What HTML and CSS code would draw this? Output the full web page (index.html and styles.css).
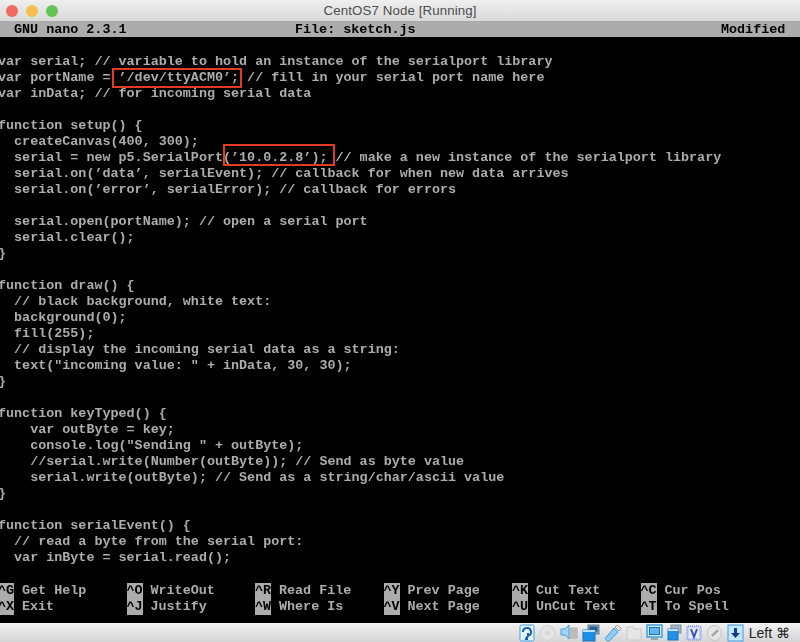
FILE: index.html
```html
<!DOCTYPE html>
<html lang="en">
<head>
<meta charset="utf-8">
<title>CentOS7 Node [Running]</title>
<link rel="stylesheet" href="styles.css">
</head>
<body>
<div class="window">
  <header class="titlebar">
    <div class="lights"><span class="light red"></span><span class="light yellow"></span><span class="light green"></span></div>
    <div class="title">CentOS7 Node [Running]</div>
  </header>
  <main class="screen">
    <div class="nanobar"><span>GNU nano 2.3.1</span><span>File: sketch.js</span><span>Modified</span></div>
<pre class="code">

var serial; // variable to hold an instance of the serialport library
var portName = ’/dev/ttyACM0’; // fill in your serial port name here
var inData; // for incoming serial data

function setup() {
  createCanvas(400, 300);
  serial = new p5.SerialPort(’10.0.2.8’); // make a new instance of the serialport library
  serial.on(’data’, serialEvent); // callback for when new data arrives
  serial.on(’error’, serialError); // callback for errors

  serial.open(portName); // open a serial port
  serial.clear();
}

function draw() {
  // black background, white text:
  background(0);
  fill(255);
  // display the incoming serial data as a string:
  text("incoming value: " + inData, 30, 30);
}

function keyTyped() {
    var outByte = key;
    console.log("Sending " + outByte);
    //serial.write(Number(outByte)); // Send as byte value
    serial.write(outByte); // Send as a string/char/ascii value
}

function serialEvent() {
  // read a byte from the serial port:
  var inByte = serial.read();
</pre>
    <div class="keys">
      <div class="key"><b>^G</b><span>Get Help</span></div>
      <div class="key"><b>^O</b><span>WriteOut</span></div>
      <div class="key"><b>^R</b><span>Read File</span></div>
      <div class="key"><b>^Y</b><span>Prev Page</span></div>
      <div class="key"><b>^K</b><span>Cut Text</span></div>
      <div class="key"><b>^C</b><span>Cur Pos</span></div>
      <div class="key"><b>^X</b><span>Exit</span></div>
      <div class="key"><b>^J</b><span>Justify</span></div>
      <div class="key"><b>^W</b><span>Where Is</span></div>
      <div class="key"><b>^V</b><span>Next Page</span></div>
      <div class="key"><b>^U</b><span>UnCut Text</span></div>
      <div class="key"><b>^T</b><span>To Spell</span></div>
    </div>
    <div class="mark mark-port"></div>
    <div class="mark mark-ip"></div>
  </main>
  <footer class="statusbar">
    <svg class="ic" width="16" height="18" viewBox="0 0 16 18"><rect x="1" y="1" width="14" height="16" rx="1.5" fill="#e4f3fc" stroke="#3f9ee0"/><path d="M4 8a4 4 0 1 1 5 3.800V9M9 11.800 6.500 15M9 15H6" fill="none" stroke="#1c5fa8" stroke-width="2"/></svg>
    <svg class="ic" width="17" height="18" viewBox="0 0 17 18"><circle cx="8.500" cy="9" r="7.500" fill="#e4e4e4" stroke="#cfcfcf"/><circle cx="8.500" cy="9" r="1.500" fill="#ececec" stroke="#bbb" stroke-width=".7"/></svg>
    <svg class="ic" width="18" height="18" viewBox="0 0 18 18"><path d="M1 5h4l4-4v14l-4-4H1z" fill="#9fd6f6" stroke="#3f9ee0"/><rect x="10" y="4" width="7" height="10" fill="#cfcfcf" stroke="#aaa"/><path d="M11 6h5M11 8h5M11 10h5M11 12h5" stroke="#999" stroke-width=".7"/></svg>
    <svg class="ic" width="18" height="18" viewBox="0 0 18 18"><rect x="6" y="1" width="11" height="9" fill="#9a9a9a" stroke="#5d87a8"/><rect x="7.500" y="2.500" width="8" height="5" fill="#2a5f98"/><rect x="1" y="6" width="12" height="11" fill="#1b8fe6" stroke="#1a6fb8"/><rect x="1" y="6" width="12" height="2" fill="#bde0f7"/></svg>
    <svg class="ic" width="18" height="18" viewBox="0 0 18 18"><path d="M1.500 14 10 4l4 4-8 8.500c-2 1.200-5 0-4.500-2.500z" fill="#8ecbf3" stroke="#3f9ee0"/><path d="m11 3 2.500-2L17 4.500 15 7z" fill="#e8e8e8" stroke="#999"/></svg>
    <svg class="ic" width="16" height="18" viewBox="0 0 16 18"><path d="M1 5V3h6l1 2h7v11H1z" fill="#e6e6e6" stroke="#c9c9c9"/></svg>
    <svg class="ic" width="17" height="18" viewBox="0 0 17 18"><rect x="1" y="1" width="15" height="12" fill="#d9eefb" stroke="#3f9ee0" stroke-width="1.500"/><rect x="3.500" y="3.500" width="10" height="7" fill="#62b5ee" stroke="#1d6fb5"/><path d="M5 15h7" stroke="#9aa" stroke-width="2"/></svg>
    <svg class="ic" width="15" height="18" viewBox="0 0 15 18"><rect x="4" y="1" width="10" height="8" fill="#aab3bd" stroke="#7c93a8"/><rect x="1" y="5" width="10" height="11" fill="#2191e8" stroke="#1a70bb"/><rect x="1" y="5" width="10" height="2" fill="#c4e2f7"/></svg>
    <svg class="ic" width="16" height="18" viewBox="0 0 16 18"><rect x="1" y="2" width="14" height="14" rx="1" fill="#c9d3f5" stroke="#5a6fd0" stroke-dasharray="1 1"/><rect x="3" y="4" width="10" height="10" fill="#e9edfb"/><path d="m5 5 3 8 3-8" fill="none" stroke="#3d4fb8" stroke-width="2"/></svg>
    <svg class="ic" width="17" height="18" viewBox="0 0 17 18"><ellipse cx="8.500" cy="9" rx="7" ry="7.500" fill="#e6e6e6" stroke="#c4c4c4"/><path d="m6 12 6-6" stroke="#aaa" stroke-width="2.500"/></svg>
    <svg class="ic" width="17" height="18" viewBox="0 0 17 18"><rect x="1" y="1" width="15" height="16" fill="#c5e6fb" stroke="#3f9ee0"/><path d="M7 4h3v5h3l-4.500 5L4 9h3z" fill="#123f8a"/></svg>
    <span class="hostkey">Left ⌘</span>
  </footer>
</div>
</body>
</html>
```
FILE: styles.css
```css
* { box-sizing: border-box; }
html, body { margin: 0; height: 100%; }
body { background: #000; overflow: hidden; }
.window { width: 800px; height: 642px; display: flex; flex-direction: column; overflow: hidden; }
.titlebar {
  height: 21px; flex: none; display: flex; align-items: center;
  background: linear-gradient(#efefef, #d9d9d9);
  padding-left: 6px;
}
.lights { display: flex; gap: 8px; }
.light { width: 12px; height: 12px; border-radius: 50%; }
.light.red { background: #ee6a5f; }
.light.yellow { background: #f5bf4f; }
.light.green { background: #62c554; }
.title {
  flex: 1; text-align: center; padding-right: 58px; margin-top: 1px;
  font: 13.300px/18px "Liberation Sans", Arial, sans-serif; color: #4d4d4d; letter-spacing: .1px;
}
.screen {
  flex: 1; position: relative; background: #000; color: #adadad;
  font: bold 13.400px/16px "Liberation Mono", "DejaVu Sans Mono", monospace;
  overflow: hidden; filter: blur(.35px);
}
.nanobar {
  height: 16px; background: #acacac; color: #000;
  display: grid; grid-template-columns: 281px 426px 1fr; padding: 1px 0 0 14px;
  line-height: 15px; white-space: pre;
}
.code { margin: 0 0 0 -2px; padding-top: 1px; font: inherit; white-space: pre; height: 544px; }
.keys {
  margin: 2px 0 0 -2px; display: grid; grid-template-columns: repeat(6, 128.500px); grid-auto-rows: 16px;
}
.key { white-space: pre; }
.key b { display: inline-block; width: 16px; background: #acacac; color: #000; font-weight: bold; margin-right: 8px; }
.mark { position: absolute; border: 2px solid #e33c22; }
.mark-port { left: 112px; top: 47px; width: 130px; height: 20px; }
.mark-ip { left: 223px; top: 123px; width: 112px; height: 22px; }
.statusbar {
  height: 19px; flex: none;
  background: linear-gradient(#f0f0f0, #d6d6d6);
  border-top: 1px solid #f6f6f6;
  display: flex; align-items: center; justify-content: flex-end; gap: 4px; padding-right: 10px;
}
.ic { flex: none; }
.hostkey { font: 14px/18px "Liberation Sans", Arial, sans-serif; color: #222; margin-left: 1px; white-space: nowrap; }
```
